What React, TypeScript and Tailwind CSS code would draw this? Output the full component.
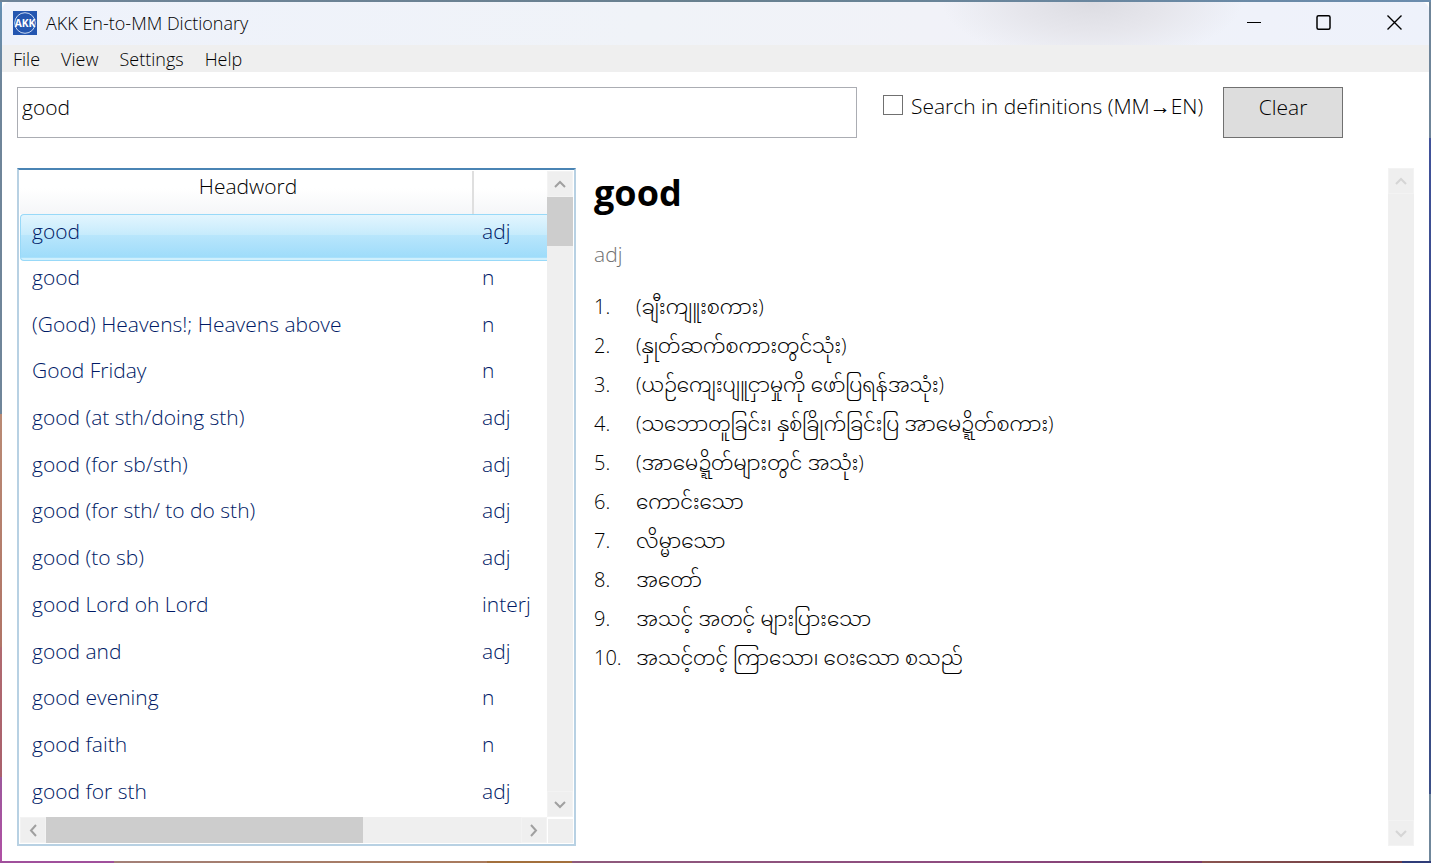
import { useState } from "react";

const entries = [
  ["good", "adj"],
  ["good", "n"],
  ["(Good) Heavens!; Heavens above", "n"],
  ["Good Friday", "n"],
  ["good (at sth/doing sth)", "adj"],
  ["good (for sb/sth)", "adj"],
  ["good (for sth/ to do sth)", "adj"],
  ["good (to sb)", "adj"],
  ["good Lord oh Lord", "interj"],
  ["good and", "adj"],
  ["good evening", "n"],
  ["good faith", "n"],
  ["good for sth", "adj"],
];

const definitions = [
  "(ချီးကျူးစကား)",
  "(နှုတ်ဆက်စကားတွင်သုံး)",
  "(ယဉ်ကျေးပျူငှာမှုကို ဖော်ပြရန်အသုံး)",
  "(သဘောတူခြင်း၊ နှစ်ခြိုက်ခြင်းပြ အာမေဍ္ဍိတ်စကား)",
  "(အာမေဍ္ဍိတ်များတွင် အသုံး)",
  "ကောင်းသော",
  "လိမ္မာသော",
  "အတော်",
  "အသင့် အတင့် များပြားသော",
  "အသင့်တင့် ကြာသော၊ ဝေးသော စသည်",
];

const arrows = {
  up: "M1 9 L6 4 L11 9",
  down: "M1 4 L6 9 L11 4",
  left: "M9 1 L4 6.5 L9 12",
  right: "M3 1 L8 6.5 L3 12",
};

function ScrollButton({ direction, className }: { direction: keyof typeof arrows; className: string }) {
  return (
    <button
      type="button"
      aria-label={`Scroll ${direction}`}
      className={`flex shrink-0 items-center justify-center border border-[#f3f3f3] bg-[#efefef] ${className}`}
    >
      <svg width="13" height="13" viewBox="0 0 13 13" fill="none" stroke="currentColor" strokeWidth="2">
        <path d={arrows[direction]} />
      </svg>
    </button>
  );
}

function AppIcon() {
  return (
    <svg width="24" height="24" viewBox="0 0 24 24" aria-hidden="true">
      <rect width="24" height="24" fill="#2456b0" />
      <circle cx="12" cy="12" r="10.3" fill="none" stroke="#dbe6f8" strokeWidth="0.9" />
      <text x="12" y="15.6" textAnchor="middle" fontSize="10.2" fontWeight="700" fill="#fff" fontFamily="Open Sans, sans-serif">
        AKK
      </text>
    </svg>
  );
}

export default function App() {
  const [query, setQuery] = useState("good");
  const [selected, setSelected] = useState(0);

  return (
    <div className="h-screen bg-[linear-gradient(to_right,#6f8599,#68808f_50%,#6b8dae),linear-gradient(to_right,#a0509c_8%,#a38078_8%,#a97a5c_34%,#a3703c_34%,#a3703c_40%,#8e5a7c_40%,#8e4a80_69%,#7c3a6c_84%,#8a5450_84%,#6e3a44_98%,#2f3c78_98%),linear-gradient(to_bottom,#6f8599_16%,#41529a_16%,#2f4079_65%,#3c5088_92%,#70879b_92%),linear-gradient(to_bottom,#6490b4,#6f8599_10%,#6f8599_48%,#b98a74_48%,#b07466_75%,#b06a70_75%,#a9606c_90%,#9c589c_90%,#b04fa4)] bg-[length:100%_2px,100%_2px,2px_100%,2px_100%] bg-[position:top,bottom,right,left] bg-no-repeat p-[2px] font-['Open_Sans','Noto_Sans_Myanmar','Myanmar_Text',sans-serif] text-[21px] font-light text-black">
      <div className="flex h-full flex-col overflow-hidden rounded-lg bg-white">
        <header className="flex h-[43px] shrink-0 items-center bg-[radial-gradient(ellipse_150px_60px_at_1090px_0px,#dcdce2,#e6e6ec_50%,transparent),linear-gradient(to_right,#eef2fb,#f0f3f8_45%,#f1f2f8_65%,#eef2fb)] pl-[11px] pb-[2px]">
          <AppIcon />
          <h1 className="ml-[9px] text-lg leading-6">AKK En-to-MM Dictionary</h1>
          <div className="ml-auto flex h-full">
            <button type="button" aria-label="Minimize" className="flex w-[70px] items-center justify-center">
              <svg width="16" height="16" viewBox="0 0 16 16" stroke="#000" strokeWidth="1"><path d="M1 7.5 H15" /></svg>
            </button>
            <button type="button" aria-label="Maximize" className="flex w-[70px] items-center justify-center">
              <svg width="16" height="16" viewBox="0 0 16 16" fill="none" stroke="#000" strokeWidth="1.5"><rect x="1" y="0.75" width="13" height="13.5" rx="1.5" /></svg>
            </button>
            <button type="button" aria-label="Close" className="flex w-[70px] items-center justify-center">
              <svg width="16" height="16" viewBox="0 0 16 16" stroke="#000" strokeWidth="1.4"><path d="M1.5 0.5 L15.5 14.5 M15.5 0.5 L1.5 14.5" /></svg>
            </button>
          </div>
        </header>

        <nav className="flex h-[27px] shrink-0 items-center gap-[21px] bg-[#efefef] px-[11px] text-lg leading-6 text-black">
          {["File", "View", "Settings", "Help"].map((item) => (
            <button key={item} type="button">{item}</button>
          ))}
        </nav>

        <main className="flex min-h-0 flex-1 flex-col px-[15px] pt-[15px] pb-[15px]">
          <div className="flex shrink-0 items-start">
            <input
              type="text"
              aria-label="Search"
              value={query}
              onChange={(e) => setQuery(e.target.value)}
              className="h-[51px] w-[840px] border border-[#abadb3] px-1 pb-3 outline-none"
            />
            <label className="ml-[26px] flex h-[51px] items-center gap-2 pb-3 whitespace-nowrap">
              <input type="checkbox" className="mb-1 size-5 appearance-none border border-[#707070] bg-white checked:bg-[#3c7fb1]" />
              Search in definitions (MM→EN)
            </label>
            <button
              type="button"
              onClick={() => setQuery("")}
              className="ml-5 h-[51px] w-[120px] border border-[#707070] bg-[#dddddd] pb-2.5"
            >
              Clear
            </button>
          </div>

          <div className="mt-[30px] flex min-h-0 flex-1">
            <section className="flex w-[559px] shrink-0 flex-col border-2 border-[#b8d1e3] border-t-[#4a84b4] p-px">
              <div className="flex min-h-0 flex-1">
                <div className="min-w-0 flex-1 overflow-hidden">
                  <table className="h-[calc(100%+4px)] w-[820px] table-fixed border-separate border-spacing-0 text-left text-[#001a66]">
                    <thead>
                      <tr className="h-[43px] bg-linear-to-b from-white from-40% to-[#f5f6f8] text-black">
                        <th className="w-[454px] border-r-2 border-[#dfdfdf] pb-3.5 pl-1 text-center font-light leading-7">Headword</th>
                        <th aria-label="Part of speech" />
                      </tr>
                    </thead>
                    <tbody>
                      {entries.map(([word, kind], i) => (
                        <tr
                          key={i}
                          onClick={() => setSelected(i)}
                          className={
                            i === selected
                              ? "[&>td]:border-y [&>td]:border-[#98d9f8] [&>td]:bg-[linear-gradient(to_bottom,#e3f5fe,#c6ebfc_44%,#b9e6fc_44%,#9edcfa_94%,#d0f0fd_96%)]"
                              : ""
                          }
                        >
                          <td className={`leading-7 whitespace-nowrap ${i === selected ? "rounded-l border-l pb-3 pl-[11px]" : "pb-3.5 pl-3"}`}>{word}</td>
                          <td className={`pl-2 leading-7 ${i === selected ? "pb-3" : "pb-3.5"}`}>{kind}</td>
                        </tr>
                      ))}
                    </tbody>
                  </table>
                </div>
                <div className="flex w-[26px] shrink-0 flex-col bg-[#efefef] text-[#a0a0a0]">
                  <ScrollButton direction="up" className="h-[26px] w-full" />
                  <div className="h-[49px] bg-[#cdcdcd]" />
                  <ScrollButton direction="down" className="mt-auto h-[26px] w-full" />
                </div>
              </div>
              <div className="flex h-[26px] shrink-0 bg-[#efefef] text-[#a0a0a0]">
                <ScrollButton direction="left" className="h-full w-[26px]" />
                <div className="w-[317px] bg-[#cdcdcd]" />
                <ScrollButton direction="right" className="ml-auto h-full w-[26px]" />
                <div className="w-[26px] border-t-2 border-l border-white" />
              </div>
            </section>

            <article className="min-w-0 flex-1 pl-[18px]">
              <h2 className="text-4xl leading-[50px] font-bold">good</h2>
              <p className="mt-5 leading-8 text-[#707070]">adj</p>
              <ol className="mt-[17px] text-xl">
                {definitions.map((text, i) => (
                  <li key={i} className="flex h-[39px] items-center whitespace-nowrap">
                    <span className="w-[42px] shrink-0">{i + 1}.</span>
                    <span lang="my">{text}</span>
                  </li>
                ))}
              </ol>
            </article>

            <div className="flex w-[26px] shrink-0 flex-col justify-between bg-[#efefef] text-[#d5d5d5]">
              <ScrollButton direction="up" className="h-[26px] w-full" />
              <ScrollButton direction="down" className="h-[26px] w-full" />
            </div>
          </div>
        </main>
      </div>
    </div>
  );
}
